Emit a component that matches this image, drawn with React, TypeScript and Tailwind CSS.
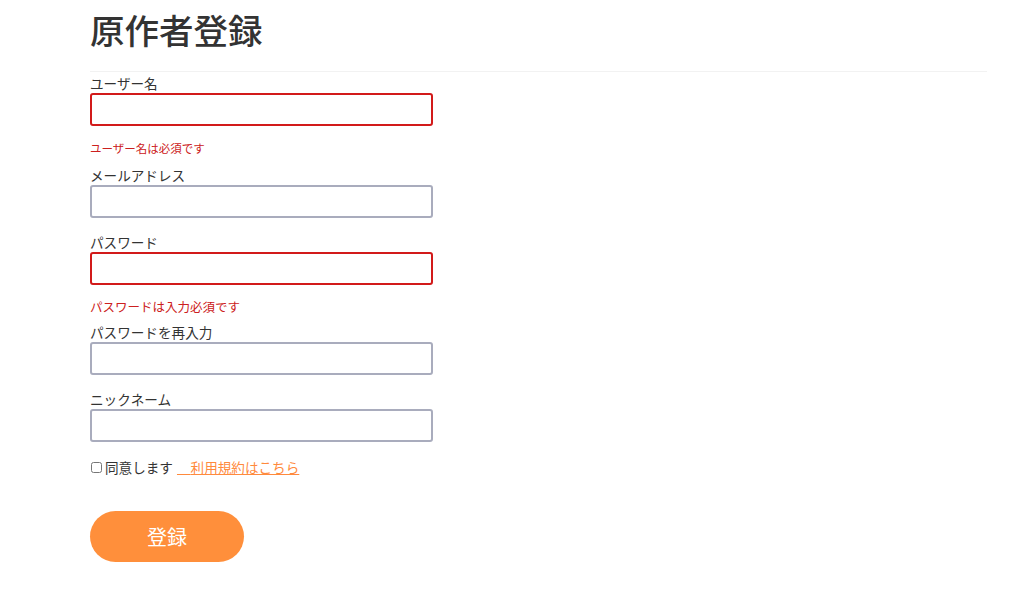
export default function App() {
  return (
    <div className="min-h-[593px] bg-white text-[#333] font-['Noto_Sans_CJK_JP','Noto_Sans',sans-serif]">
      <div className="ml-[90px] w-[897px]">
        <h1 className="pt-[7px] text-[34.5px] leading-[44px] font-medium text-[#333]">原作者登録</h1>
        <hr className="mt-[20px] border-t border-[#f2f2f2]" />

        <form className="flex flex-col" onSubmit={(e) => e.preventDefault()}>
          {/* ユーザー名 */}
          <div className="flex flex-col">
            <label className="mt-[2px] mb-[1px] text-[13.6px] leading-[18px]">ユーザー名</label>
            <input type="text" className="w-[343px] h-[33px] rounded-[3px] border-2 border-[#d21a1a] px-2 outline-none" />
            <p className="mt-[14px] mb-[10px] text-[11.5px] leading-4 text-[#cc2020]">ユーザー名は必須です</p>
          </div>

          <div className="flex flex-col">
            <label className="mb-[1px] text-[13.6px] leading-[18px]">メールアドレス</label>
            <input type="email" className="w-[343px] h-[33px] rounded-[3px] border-2 border-[#a9acbd] px-2 outline-none" />
          </div>

          <div className="flex flex-col mt-[15px]">
            <label className="mb-[1px] text-[13.6px] leading-[18px]">パスワード</label>
            <input type="password" className="w-[343px] h-[33px] rounded-[3px] border-2 border-[#d21a1a] px-2 outline-none" />
            <p className="mt-[14px] mb-[8px] text-[12.5px] leading-4 text-[#cc2020]">パスワードは入力必須です</p>
          </div>

          <div className="flex flex-col">
            <label className="mb-[1px] text-[13.6px] leading-[18px]">パスワードを再入力</label>
            <input type="password" className="w-[343px] h-[33px] rounded-[3px] border-2 border-[#a9acbd] px-2 outline-none" />
          </div>

          <div className="flex flex-col mt-[15px]">
            <label className="mb-[1px] text-[13.6px] leading-[18px]">ニックネーム</label>
            <input type="text" className="w-[343px] h-[33px] rounded-[3px] border-2 border-[#a9acbd] px-2 outline-none" />
          </div>

          <div className="mt-[15px] flex items-center text-[13.6px] leading-5">
            <input type="checkbox" className="w-[11px] h-[11px] mr-[3px] ml-[1px]" />
            <span>同意します</span>
            <a href="#" className="ml-[4px] text-[#ff8a3d] underline">{'\u3000'}利用規約はこちら</a>
          </div>

          <button
            type="submit"
            className="mt-[34px] w-[154px] h-[51px] rounded-full bg-[#ff8f3b] text-white text-[20px]"
          >
            登録
          </button>
        </form>
      </div>
    </div>
  );
}
